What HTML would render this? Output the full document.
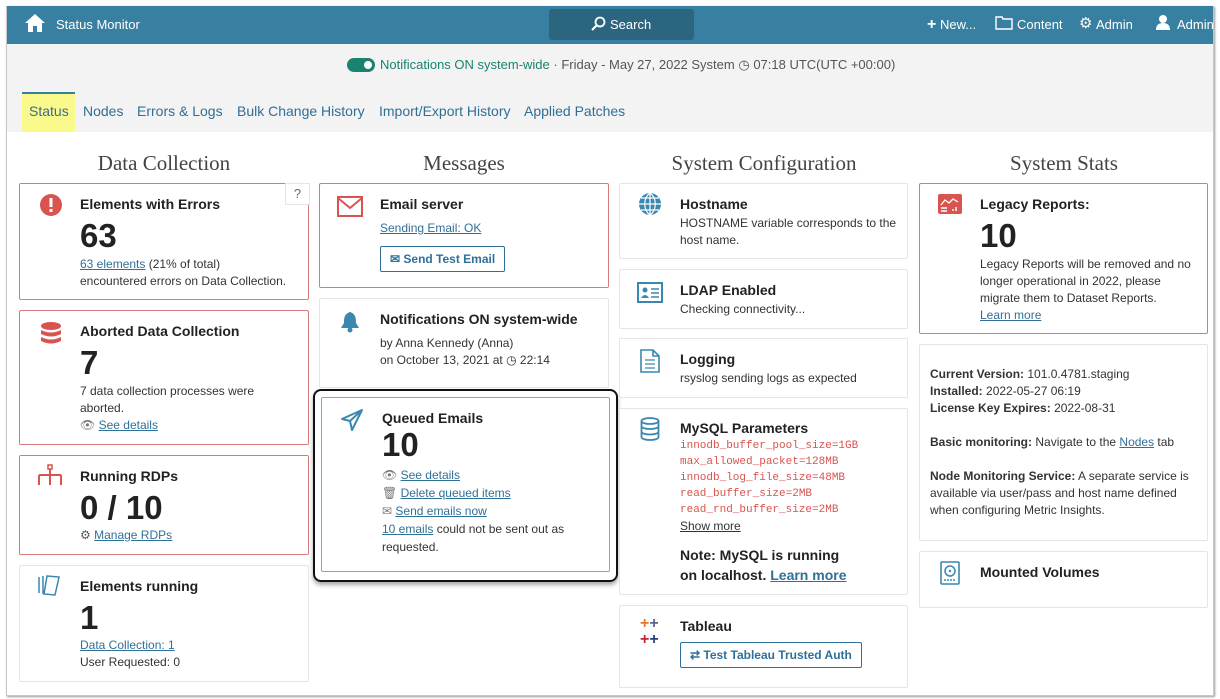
<!DOCTYPE html>
<html><head><meta charset="utf-8"><style>
*{box-sizing:border-box;margin:0;padding:0}
body{width:1220px;height:699px;background:#fff;font-family:"Liberation Sans",sans-serif;position:relative;overflow:hidden;color:#333}
.frame{position:absolute;left:6px;top:6px;width:1208px;height:690px;border:1px solid #c8c8c8;border-top:none;box-shadow:1px 1px 2px #999}
.hdr{position:absolute;left:7px;top:6px;width:1206px;height:38px;background:#3880a1;color:#fff;font-size:13px}
.sub{position:absolute;left:7px;top:44px;width:1206px;height:88px;background:#f3f3f3}
.abs{position:absolute}
a,.lk{color:#2f7099;text-decoration:underline}
.tab{position:absolute;top:103px;font-size:14px;color:#2f6e96}
h2{position:absolute;font-family:"Liberation Serif",serif;font-weight:normal;font-size:21px;color:#444;text-align:center;width:290px;top:151px}
.c{position:absolute;border:1px solid #e5e5e5;background:#fff;border-radius:2px}
.r{border-color:#d87a7a}
.t{position:absolute;left:60px;font-weight:bold;font-size:14px;color:#222}
.n{position:absolute;left:60px;font-weight:bold;font-size:33px;color:#222}
.x{position:absolute;left:60px;font-size:12px;line-height:17px;color:#333}
.ic{position:absolute;left:16px;top:10px}
.mono{font-family:"Liberation Mono",monospace;color:#d9534f;font-size:11px;line-height:16px}
.btn{display:inline-block;border:1px solid #2f7099;color:#2f7099;font-weight:bold;border-radius:2px;padding:5px 9px;font-size:12px}
</style></head><body>
<div class="frame"></div>
<div class="hdr">
 <svg class="abs" style="left:17px;top:7px" width="22" height="20" viewBox="0 0 22 20"><path d="M11 1 L1 10 L4 10 L4 19 L9 19 L9 13 L13 13 L13 19 L18 19 L18 10 L21 10 Z" fill="#fff"/></svg>
 <div class="abs" style="left:49px;top:11px">Status Monitor</div>
 <div class="abs" style="left:542px;top:3px;width:145px;height:31px;background:#2c6580;border-radius:3px"></div>
 <svg class="abs" style="left:583px;top:10px" width="16" height="16" viewBox="0 0 16 16"><circle cx="10" cy="6" r="4.5" stroke="#fff" stroke-width="1.8" fill="none"/><path d="M7 9 L2 14" stroke="#fff" stroke-width="2"/></svg>
 <div class="abs" style="left:603px;top:11px">Search</div>
 <div class="abs" style="left:920px;top:10px"><b style="font-size:16px">+</b> New...</div>
 <svg class="abs" style="left:988px;top:9px" width="18" height="15"><path d="M1 2h6l1 2h9v10H1z" fill="none" stroke="#fff" stroke-width="1.4"/></svg>
 <div class="abs" style="left:1010px;top:11px">Content</div>
 <div class="abs" style="left:1072px;top:8px;font-size:15px">⚙</div>
 <div class="abs" style="left:1089px;top:11px">Admin</div>
 <svg class="abs" style="left:1149px;top:8px" width="14" height="16"><circle cx="7" cy="5" r="4" fill="#fff"/><path d="M0 16 Q0 9 7 9 Q14 9 14 16Z" fill="#fff"/></svg>
 <div class="abs" style="left:1170px;top:11px">Admin</div>
</div>
<div class="sub"></div>
<div class="abs" style="left:347px;top:58px;width:28px;height:14px;background:#19836f;border-radius:7px"><div style="position:absolute;right:3px;top:3px;width:8px;height:8px;background:#fff;border-radius:50%"></div></div>
<div class="abs" style="left:380px;top:57px;font-size:13px;color:#555"><span style="color:#19836f">Notifications ON system-wide</span> · Friday - May 27, 2022 System <span style="font-size:13px">◷</span> 07:18 UTC(UTC +00:00)</div>
<div class="abs" style="left:22px;top:92px;width:53px;height:40px;background:#fafa8c;border-top:2px solid #3880a1"></div>
<div class="tab" style="left:29px;color:#3c6b8a">Status</div>
<div class="tab" style="left:83px">Nodes</div>
<div class="tab" style="left:137px">Errors &amp; Logs</div>
<div class="tab" style="left:237px">Bulk Change History</div>
<div class="tab" style="left:379px">Import/Export History</div>
<div class="tab" style="left:524px">Applied Patches</div>

<h2 style="left:19px">Data Collection</h2>
<h2 style="left:319px">Messages</h2>
<h2 style="left:619px">System Configuration</h2>
<h2 style="left:919px">System Stats</h2>

<!-- col1 -->
<div class="c r" style="left:19px;top:183px;width:290px;height:117px">
 <svg class="ic" style="left:20px" width="22" height="22"><circle cx="11" cy="11" r="11" fill="#d9534f"/><rect x="9.5" y="4" width="3" height="9" fill="#fff"/><rect x="9.5" y="15" width="3" height="3" fill="#fff"/></svg>
 <div class="abs" style="left:265px;top:-1px;width:25px;height:22px;border:1px solid #e5e5e5;background:#fff;text-align:center;font-size:13px;color:#666;line-height:20px">?</div>
 <div class="t" style="top:12px">Elements with Errors</div>
 <div class="n" style="top:33px">63</div>
 <div class="x" style="top:72px"><a>63 elements</a> (21% of total)<br>encountered errors on Data Collection.</div>
</div>
<div class="c r" style="left:19px;top:310px;width:290px;height:135px">
 <svg class="ic" style="left:20px;top:11px" width="22" height="24"><ellipse cx="11" cy="4" rx="10" ry="4" fill="#d9534f"/><path d="M1 8 Q11 13 21 8 V12 Q11 17 1 12Z M1 15 Q11 20 21 15 V19 Q11 24 1 19Z" fill="#d9534f"/></svg>
 <div class="t" style="top:12px">Aborted Data Collection</div>
 <div class="n" style="top:33px">7</div>
 <div class="x" style="top:72px">7 data collection processes were<br>aborted.<br><span style="color:#777">👁</span> <a>See details</a></div>
</div>
<div class="c r" style="left:19px;top:455px;width:290px;height:100px">
 <svg class="ic" style="left:17px;top:8px" width="26" height="22"><rect x="11" y="1" width="4" height="4" fill="none" stroke="#d9534f" stroke-width="1.5"/><path d="M13 5V11 M2 11H24 M2 11V21 M13 11V21 M24 11V21" stroke="#d9534f" stroke-width="2" fill="none"/></svg>
 <div class="t" style="top:12px">Running RDPs</div>
 <div class="n" style="top:33px">0 / 10</div>
 <div class="x" style="top:71px"><span style="color:#555">⚙</span> <a>Manage RDPs</a></div>
</div>
<div class="c" style="left:19px;top:565px;width:290px;height:117px">
 <svg class="ic" style="left:17px;top:8px" width="26" height="22"><path d="M2 3V19 M6 2V20 M10 2 L22 3 L18 21 L7 20Z" stroke="#3a87b0" stroke-width="1.5" fill="none"/></svg>
 <div class="t" style="top:12px">Elements running</div>
 <div class="n" style="top:33px">1</div>
 <div class="x" style="top:71px"><a>Data Collection: 1</a><br>User Requested: 0</div>
</div>

<!-- col2 -->
<div class="c r" style="left:319px;top:183px;width:290px;height:105px">
 <svg class="ic" style="left:17px;top:12px" width="26" height="21"><rect x="1" y="1" width="24" height="19" fill="none" stroke="#d9534f" stroke-width="2"/><path d="M1 2 L13 12 L25 2" fill="none" stroke="#d9534f" stroke-width="2"/></svg>
 <div class="t" style="top:12px">Email server</div>
 <div class="x" style="top:36px"><a>Sending Email: OK</a></div>
 <div class="abs" style="left:60px;top:62px"><span class="btn">✉ Send Test Email</span></div>
</div>
<div class="c" style="left:319px;top:298px;width:290px;height:90px">
 <svg class="ic" style="left:20px;top:12px" width="20" height="22"><path d="M10 1 C4 3 4 8 4 12 L1 17 H19 L16 12 C16 8 16 3 10 1Z" fill="#3a87b0"/><circle cx="10" cy="19" r="2.5" fill="#3a87b0"/></svg>
 <div class="t" style="top:12px">Notifications ON system-wide</div>
 <div class="x" style="top:36px">by Anna Kennedy (Anna)<br>on October 13, 2021 at ◷ 22:14</div>
</div>
<div class="abs" style="left:313px;top:389px;width:305px;height:193px;border:2px solid #111;border-radius:8px;box-shadow:0 3px 4px #aaa"></div>
<div class="c" style="left:321px;top:397px;width:289px;height:175px;border-color:#7fa8cc">
 <svg class="ic" style="left:18px;top:10px" width="24" height="24"><path d="M22 2 L2 11 L10 13 L12 22 Z M22 2 L10 13" fill="none" stroke="#3a87b0" stroke-width="2" stroke-linejoin="round"/></svg>
 <div class="t" style="top:12px">Queued Emails</div>
 <div class="n" style="top:28px">10</div>
 <div class="x" style="top:68px;line-height:18px"><span style="color:#777">👁</span> <a>See details</a><br><span style="color:#777">🗑</span> <a>Delete queued items</a><br><span style="color:#777">✉</span> <a>Send emails now</a><br><a>10 emails</a> could not be sent out as<br>requested.</div>
</div>

<!-- col3 -->
<div class="c" style="left:619px;top:183px;width:289px;height:76px">
 <svg class="ic" style="left:18px;top:8px" width="24" height="24"><circle cx="12" cy="12" r="11" fill="#3a87b0"/><path d="M1 12H23 M12 1V23 M3 6H21 M3 18H21 M12 1C5 6 5 18 12 23 M12 1C19 6 19 18 12 23" stroke="#fff" stroke-width="1.2" fill="none"/></svg>
 <div class="t" style="top:12px">Hostname</div>
 <div class="x" style="top:31px">HOSTNAME variable corresponds to the<br>host name.</div>
</div>
<div class="c" style="left:619px;top:269px;width:289px;height:60px">
 <svg class="ic" style="left:17px;top:12px" width="26" height="21"><rect x="1" y="1" width="24" height="19" fill="none" stroke="#3a87b0" stroke-width="2"/><circle cx="8" cy="8" r="2.5" fill="#3a87b0"/><path d="M4 16 Q8 10 12 16Z" fill="#3a87b0"/><path d="M14 7H22 M14 11H22 M14 15H22" stroke="#3a87b0" stroke-width="1.5"/></svg>
 <div class="t" style="top:12px">LDAP Enabled</div>
 <div class="x" style="top:31px">Checking connectivity...</div>
</div>
<div class="c" style="left:619px;top:338px;width:289px;height:60px">
 <svg class="ic" style="left:20px;top:10px" width="20" height="24"><path d="M1 1H13L19 7V23H1Z M13 1V7H19" fill="none" stroke="#3a87b0" stroke-width="1.6"/><path d="M5 11H15 M5 15H15 M5 19H15" stroke="#3a87b0" stroke-width="1.3"/></svg>
 <div class="t" style="top:12px">Logging</div>
 <div class="x" style="top:31px">rsyslog sending logs as expected</div>
</div>
<div class="c" style="left:619px;top:408px;width:289px;height:187px">
 <svg class="ic" style="left:20px;top:8px" width="20" height="24"><ellipse cx="10" cy="4" rx="8.5" ry="3" fill="none" stroke="#3a87b0" stroke-width="1.8"/><path d="M1.5 4V20 C1.5 24 18.5 24 18.5 20 V4 M1.5 9C1.5 13 18.5 13 18.5 9 M1.5 14.5C1.5 18.5 18.5 18.5 18.5 14.5" fill="none" stroke="#3a87b0" stroke-width="1.8"/></svg>
 <div class="t" style="top:11px">MySQL Parameters</div>
 <div class="x mono" style="top:29px">innodb_buffer_pool_size=1GB<br>max_allowed_packet=128MB<br>innodb_log_file_size=48MB<br>read_buffer_size=2MB<br>read_rnd_buffer_size=2MB</div>
 <div class="x" style="top:109px;color:#333;text-decoration:underline">Show more</div>
 <div class="t" style="top:136px;line-height:20px">Note: MySQL is running<br>on localhost. <a>Learn more</a></div>
</div>
<div class="c" style="left:619px;top:605px;width:289px;height:83px">
 <div class="abs" style="left:20px;top:10px;font-size:16px;font-weight:bold;line-height:16px"><span style="color:#e8762d">+</span><span style="color:#5b6591">+</span><br><span style="color:#c72037">+</span><span style="color:#1f457e">+</span></div>
 <div class="t" style="top:12px">Tableau</div>
 <div class="abs" style="left:60px;top:36px"><span class="btn">⇄ Test Tableau Trusted Auth</span></div>
</div>

<!-- col4 -->
<div class="c r" style="left:919px;top:183px;width:289px;height:151px">
 <svg class="ic" style="left:18px;top:10px" width="24" height="20"><rect width="24" height="20" rx="2" fill="#d9534f"/><path d="M3 11 L7 6 L11 9 L15 5 L20 8" stroke="#fff" stroke-width="1.3" fill="none"/><path d="M3 14H9 M3 17H9 M15 17V15 M18 17V13" stroke="#fff" stroke-width="1.4"/></svg>
 <div class="t" style="top:12px">Legacy Reports:</div>
 <div class="n" style="top:33px">10</div>
 <div class="x" style="top:72px">Legacy Reports will be removed and no<br>longer operational in 2022, please<br>migrate them to Dataset Reports.<br><a>Learn more</a></div>
</div>
<div class="c" style="left:919px;top:344px;width:289px;height:197px">
 <div class="abs" style="left:10px;top:21px;font-size:12px;line-height:17px;width:275px"><b>Current Version:</b> 101.0.4781.staging<br><b>Installed:</b> 2022-05-27 06:19<br><b>License Key Expires:</b> 2022-08-31<br><br><b>Basic monitoring:</b> Navigate to the <a>Nodes</a> tab<br><br><b>Node Monitoring Service:</b> A separate service is available via user/pass and host name defined when configuring Metric Insights.</div>
</div>
<div class="c" style="left:919px;top:551px;width:289px;height:57px">
 <svg class="ic" style="left:20px;top:9px" width="20" height="24"><rect x="1" y="1" width="18" height="22" rx="1" fill="none" stroke="#3a87b0" stroke-width="1.6"/><circle cx="10" cy="10" r="5" fill="none" stroke="#3a87b0" stroke-width="1.5"/><circle cx="10" cy="10" r="1.2" fill="#3a87b0"/><path d="M4 19H16" stroke="#3a87b0" stroke-width="1.5" stroke-dasharray="2 1"/></svg>
 <div class="t" style="top:12px">Mounted Volumes</div>
</div>
</body></html>
